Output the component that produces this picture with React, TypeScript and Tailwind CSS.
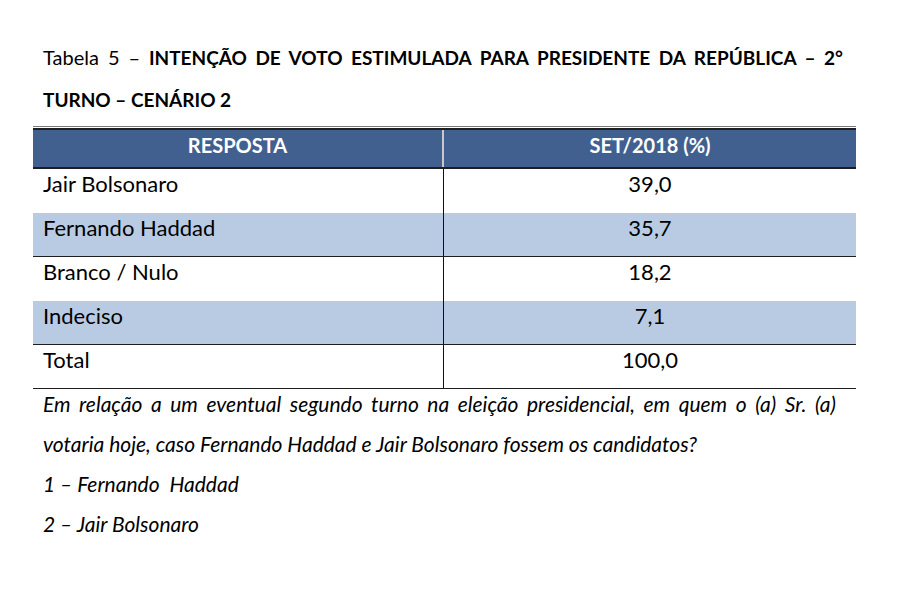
import React from 'react';

const rows = [
  { label: 'Jair Bolsonaro', value: '39,0', shaded: false, line: false },
  { label: 'Fernando Haddad', value: '35,7', shaded: true, line: true },
  { label: 'Branco / Nulo', value: '18,2', shaded: false, line: false },
  { label: 'Indeciso', value: '7,1', shaded: true, line: true },
  { label: 'Total', value: '100,0', shaded: false, line: true },
];

export default function App() {
  return (
    <div className="w-[905px] h-[600px] bg-white text-black font-['Lato',sans-serif] overflow-hidden">
      {/* Title */}
      <div className="pt-[36px] pl-[43px] w-[843px] text-[19px] leading-[42px]">
        <div className="whitespace-nowrap text-justify [text-align-last:justify]">
          <span className="text-[20px]">Tabela 5 –</span>{' '}
          <span className="font-bold">INTENÇÃO DE VOTO ESTIMULADA PARA PRESIDENTE DA REPÚBLICA – 2°</span>
        </div>
        <div className="font-bold">TURNO – CENÁRIO 2</div>
      </div>

      {/* Table */}
      <div className="mt-[5px] ml-[33px] w-[823px]">
        <div className="h-px bg-[#7a7a7a]" />
        <div className="h-px bg-white" />
        <div className="h-[2px] bg-[#1e1e1e]" />
        <div className="grid grid-cols-[411px_412px] h-[39px] bg-[#41608f] text-white font-bold text-[20px] leading-[30px] border-b-2 border-[#1e1e1e]">
          <div className="text-center border-r-2 border-[#c8c8c8]">RESPOSTA</div>
          <div className="text-center">SET/2018 (%)</div>
        </div>
        {rows.map((r) => (
          <div
            key={r.label}
            className={`grid grid-cols-[411px_412px] h-[44px] text-[22px] leading-[30px] ${
              r.shaded ? 'bg-[#b9cbe3]' : 'bg-white'
            } ${r.line ? 'border-b border-[#1e1e1e]' : ''}`}
          >
            <div className="pl-[10px] border-r border-[#111]">{r.label}</div>
            <div className="text-center">{r.value}</div>
          </div>
        ))}
      </div>

      {/* Notes */}
      <div className="-mt-[5px] pl-[43px] w-[836px] italic text-[21px] leading-[40px]">
        <p className="whitespace-nowrap text-justify [text-align-last:justify]">
          Em relação a um eventual segundo turno na eleição presidencial, em quem o (a) Sr. (a)
        </p>
        <p>votaria hoje, caso Fernando Haddad e Jair Bolsonaro fossem os candidatos?</p>
        <p className="whitespace-pre">1 – Fernando  Haddad</p>
        <p>2 – Jair Bolsonaro</p>
      </div>
    </div>
  );
}
